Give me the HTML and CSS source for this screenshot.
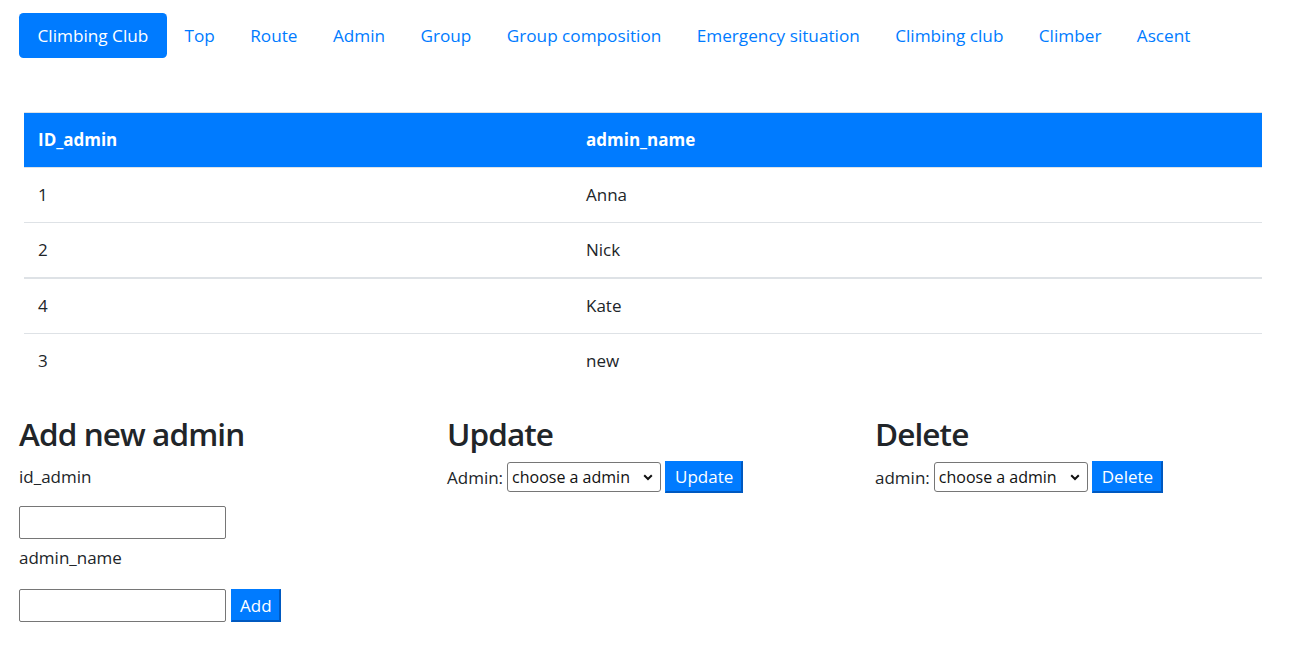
FILE: index.html
```html
<!DOCTYPE html>
<html lang="en">
<head>
<meta charset="utf-8">
<title>Climbing Club — Admin</title>
<link rel="stylesheet" href="styles.css">
</head>
<body>
<div class="page">
  <ul class="nav">
    <li><a class="nav-link active" href="#">Climbing Club</a></li>
    <li><a class="nav-link" href="#">Top</a></li>
    <li><a class="nav-link" href="#">Route</a></li>
    <li><a class="nav-link" href="#">Admin</a></li>
    <li><a class="nav-link" href="#">Group</a></li>
    <li><a class="nav-link" href="#">Group composition</a></li>
    <li><a class="nav-link" href="#">Emergency situation</a></li>
    <li><a class="nav-link" href="#">Climbing club</a></li>
    <li><a class="nav-link" href="#">Climber</a></li>
    <li><a class="nav-link" href="#">Ascent</a></li>
  </ul>

  <table class="data">
    <thead>
      <tr><th class="col-id">ID_admin</th><th>admin_name</th></tr>
    </thead>
    <tbody>
      <tr><td>1</td><td>Anna</td></tr>
      <tr><td>2</td><td>Nick</td></tr>
      <tr class="thick"><td>4</td><td>Kate</td></tr>
      <tr><td>3</td><td>new</td></tr>
    </tbody>
  </table>

  <div class="forms">
    <section class="panel">
      <h2>Add new admin</h2>
      <div class="label first">id_admin</div>
      <input class="field" type="text">
      <div class="label second">admin_name</div>
      <div class="line line-wide">
        <input class="field" type="text">
        <button class="btn" type="button">Add</button>
      </div>
    </section>

    <section class="panel">
      <h2 class="tight">Update</h2>
      <div class="line">
        <span class="inline-label">Admin:</span>
        <span class="select-wrap">
          <select class="select"><option>choose a admin</option></select>
          <svg class="chev" width="10" height="7" viewBox="0 0 10 7"><path d="M1.2 1.2 L5 5 L8.8 1.2" fill="none" stroke="#111" stroke-width="2"/></svg>
        </span>
        <button class="btn btn-tall" type="button">Update</button>
      </div>
    </section>

    <section class="panel">
      <h2 class="tight">Delete</h2>
      <div class="line">
        <span class="inline-label">admin:</span>
        <span class="select-wrap">
          <select class="select"><option>choose a admin</option></select>
          <svg class="chev" width="10" height="7" viewBox="0 0 10 7"><path d="M1.2 1.2 L5 5 L8.8 1.2" fill="none" stroke="#111" stroke-width="2"/></svg>
        </span>
        <button class="btn btn-tall" type="button">Delete</button>
      </div>
    </section>
  </div>
</div>
</body>
</html>
```

FILE: styles.css
```css
* { box-sizing: border-box; }

body {
  margin: 0;
  font-family: "Open Sans", "Noto Sans", "Liberation Sans", sans-serif;
  font-size: 17px;
  line-height: 27px;
  color: #212529;
  background: #fff;
}

.page {
  padding: 13px 0 0 19px;
}

.nav {
  display: flex;
  list-style: none;
  margin: 0;
  padding: 0;
}

.nav-link {
  display: block;
  padding: 9px 17.7px;
  font-size: 17.2px;
  line-height: 27px;
  color: #007bff;
  text-decoration: none;
  border-radius: 4.5px;
}

.nav-link.active {
  background: #007bff;
  color: #fff;
  padding: 9px 18.5px;
}

.data {
  margin: 54px 0 0 5px;
  width: 1238px;
  border-collapse: collapse;
}

.data th,
.data td {
  text-align: left;
  padding: 13px 14px 14px;
  line-height: 27px;
  border-top: 1px solid #dee2e6;
}

.data th {
  background: #007bff;
  color: #fff;
  font-weight: 700;
}

.data .col-id {
  width: 548px;
}

.data tr.thick td {
  border-top: 2px solid #dee2e6;
}

.forms {
  display: grid;
  grid-template-columns: 428px 428px 420px;
  margin-top: 24px;
}

h2 {
  margin: 0 0 8px;
  font-size: 31.5px;
  line-height: 43px;
  font-weight: 600;
  letter-spacing: -0.9px;
}

h2.tight {
  margin-bottom: 6px;
}

.label {
  line-height: 27px;
}

.label.first {
  margin-bottom: 16px;
}

.label.second {
  margin-top: 5px;
  margin-bottom: 18px;
}

.field {
  display: block;
  width: 207px;
  height: 33px;
  border: 1px solid #767676;
  border-radius: 2px;
  font: inherit;
  padding: 1px 4px;
  background: #fff;
}

.line {
  display: flex;
  align-items: center;
  gap: 4px;
}

.line-wide {
  gap: 5px;
}

.inline-label {
  line-height: 27px;
}

.select-wrap {
  position: relative;
  display: inline-block;
}

.select {
  appearance: none;
  -webkit-appearance: none;
  width: 154px;
  height: 30px;
  border: 1px solid #767676;
  border-radius: 3px;
  background: #fff;
  color: #111;
  font-family: inherit;
  font-size: 16px;
  line-height: 26px;
  padding: 0 18px 0 4px;
  display: block;
}

.chev {
  position: absolute;
  right: 8px;
  top: 12px;
  pointer-events: none;
}

.btn {
  height: 33px;
  padding: 0 7px 0 8px;
  background: #007bff;
  color: #fff;
  font-family: inherit;
  font-size: 17px;
  line-height: 27px;
  border-style: solid;
  border-width: 1px 2px 2px 1px;
  border-color: #007bff #0059c0 #0059c0 #007bff;
  border-radius: 0;
}

.btn-tall {
  height: 32px;
  padding: 0 8px 0 9px;
}
```
